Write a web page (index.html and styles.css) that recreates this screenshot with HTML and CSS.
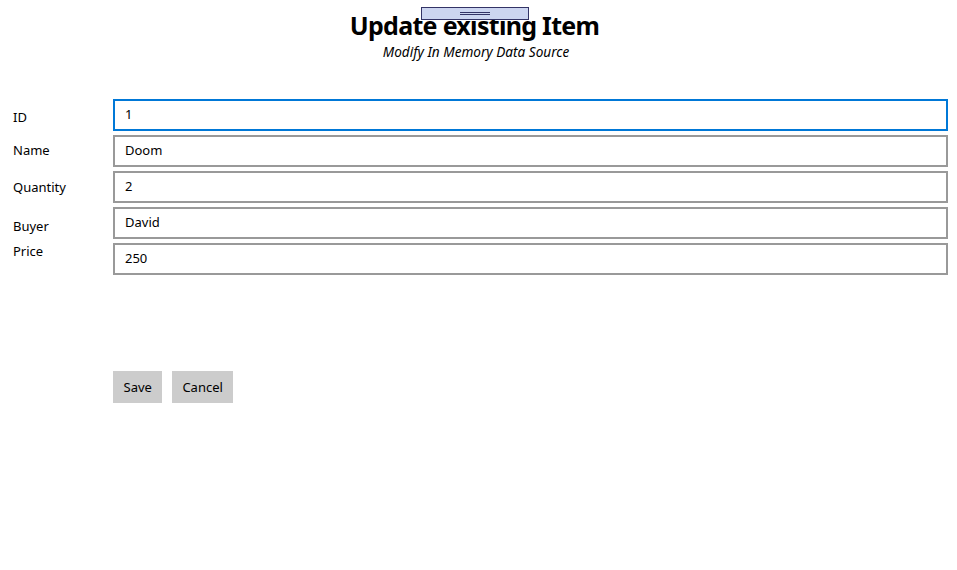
FILE: index.html
```html
<!DOCTYPE html>
<html>
<head>
<meta charset="utf-8">
<link rel="stylesheet" href="styles.css">
</head>
<body>
<div class="page">
  <header class="header">
    <h1 class="title">Update existing Item</h1>
    <p class="subtitle">Modify In Memory Data Source</p>
    <div class="grip"><span class="grip-lines"></span></div>
  </header>
  <form class="form">
    <label class="label l-id">ID</label>
    <div class="field focused">1</div>
    <label class="label l-name">Name</label>
    <div class="field">Doom</div>
    <label class="label l-qty">Quantity</label>
    <div class="field">2</div>
    <label class="label l-buyer">Buyer</label>
    <div class="field">David</div>
    <label class="label l-price">Price</label>
    <div class="field">250</div>
  </form>
  <div class="actions">
    <button class="btn" type="button">Save</button>
    <button class="btn" type="button">Cancel</button>
  </div>
</div>
</body>
</html>
```
FILE: styles.css
```css
html, body {
  margin: 0;
  padding: 0;
  background: #ffffff;
}
body {
  font-family: "Noto Sans", "Open Sans", sans-serif;
  color: #000;
  width: 957px;
  height: 570px;
  overflow: hidden;
}
.page {
  display: flex;
  flex-direction: column;
}
.header {
  position: relative;
  display: flex;
  flex-direction: column;
  align-items: center;
  padding-top: 8px;
}
.title {
  margin: 0 0 0 -8px;
  font-size: 25px;
  font-weight: 700;
  line-height: 34px;
  letter-spacing: -0.7px;
}
.subtitle {
  margin: 2px 0 0 -5px;
  font-size: 13.6px;
  font-style: italic;
  line-height: 16px;
}
.grip {
  position: absolute;
  left: 421px;
  top: 7px;
  width: 106px;
  height: 11px;
  background: #ccd5f0;
  border: 1px solid #333366;
  display: flex;
  align-items: center;
  justify-content: center;
}
.grip-lines {
  display: block;
  width: 30px;
  height: 1px;
  border-top: 1px solid #333366;
  border-bottom: 1px solid #333366;
}
.form {
  margin-top: 39px;
  display: grid;
  grid-template-columns: 100px 835px;
  row-gap: 4px;
  padding-left: 13px;
}
.label {
  font-size: 13px;
  line-height: 18px;
  align-self: start;
}
.l-id { margin-top: 9px; }
.l-name { margin-top: 6px; }
.l-qty { margin-top: 7px; }
.l-buyer { margin-top: 10px; }
.l-price { margin-top: -1px; }
.field {
  box-sizing: border-box;
  height: 32px;
  border: 2px solid #999999;
  padding: 0 10px 2px;
  font-size: 13px;
  line-height: 26px;
}
.focused {
  border-color: #0078d7;
}
.actions {
  margin-top: 96px;
  padding-left: 113px;
  display: flex;
  gap: 10px;
}
.btn {
  height: 32px;
  border: none;
  background: #cccccc;
  font-family: "Noto Sans", "Open Sans", sans-serif;
  font-size: 13px;
  padding: 0 10px;
  color: #000;
}
.btn:first-child {
  padding: 0 10.5px;
}
```
